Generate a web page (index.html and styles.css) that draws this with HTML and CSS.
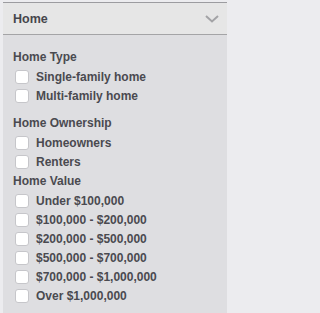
FILE: index.html
```html
<!DOCTYPE html>
<html>
<head>
<meta charset="utf-8">
<link rel="stylesheet" href="styles.css">
</head>
<body>
<div class="panel">
  <div class="header">
    <span class="title">Home</span>
    <svg class="chevron" width="14" height="8" viewBox="0 0 14 8"><polyline points="1,1 7,6.5 13,1" fill="none" stroke="#a3a3a6" stroke-width="2"/></svg>
  </div>
  <div class="content">
    <div class="group first">
      <div class="heading">Home Type</div>
      <label class="item"><span class="box"></span>Single-family home</label>
      <label class="item"><span class="box"></span>Multi-family home</label>
    </div>
    <div class="group">
      <div class="heading">Home Ownership</div>
      <label class="item"><span class="box"></span>Homeowners</label>
      <label class="item"><span class="box"></span>Renters</label>
    </div>
    <div class="group">
      <div class="heading">Home Value</div>
      <label class="item"><span class="box"></span>Under $100,000</label>
      <label class="item"><span class="box"></span>$100,000 - $200,000</label>
      <label class="item"><span class="box"></span>$200,000 - $500,000</label>
      <label class="item"><span class="box"></span>$500,000 - $700,000</label>
      <label class="item"><span class="box"></span>$700,000 - $1,000,000</label>
      <label class="item"><span class="box"></span>Over $1,000,000</label>
    </div>
  </div>
</div>
</body>
</html>
```
FILE: styles.css
```css
html, body {
  margin: 0;
  padding: 0;
  height: 100%;
}
body {
  background: #ececef;
  font-family: "Liberation Sans", Arial, sans-serif;
  font-size: 12px;
  font-weight: bold;
  color: #4a4a50;
  padding-top: 2px;
  box-sizing: border-box;
}
.panel {
  margin-left: 3px;
  width: 224px;
  height: 100%;
  background: #dedee1;
  border-top: 1px solid #9c9ca0;
  box-sizing: border-box;
  display: flex;
  flex-direction: column;
}
.header {
  height: 31px;
  background: #e6e6e6;
  border-bottom: 1px solid #a4a4a6;
  display: flex;
  align-items: center;
  justify-content: space-between;
  padding: 0 8px 0 10px;
}
.title {
  font-size: 12.5px;
  color: #46464c;
}
.chevron {
  display: block;
  margin-top: 1px;
}
.content {
  padding: 12px 0 0 10px;
}
.group.first {
  margin-bottom: 8px;
}
.heading {
  height: 20px;
  line-height: 20px;
}
.item {
  display: flex;
  align-items: center;
  height: 19px;
  padding-left: 2px;
}
.box {
  width: 14px;
  height: 14px;
  box-sizing: border-box;
  background: #ffffff;
  border: 1px solid #c6c6ca;
  border-radius: 3px;
  margin-right: 7px;
  margin-top: 1px;
}
```
